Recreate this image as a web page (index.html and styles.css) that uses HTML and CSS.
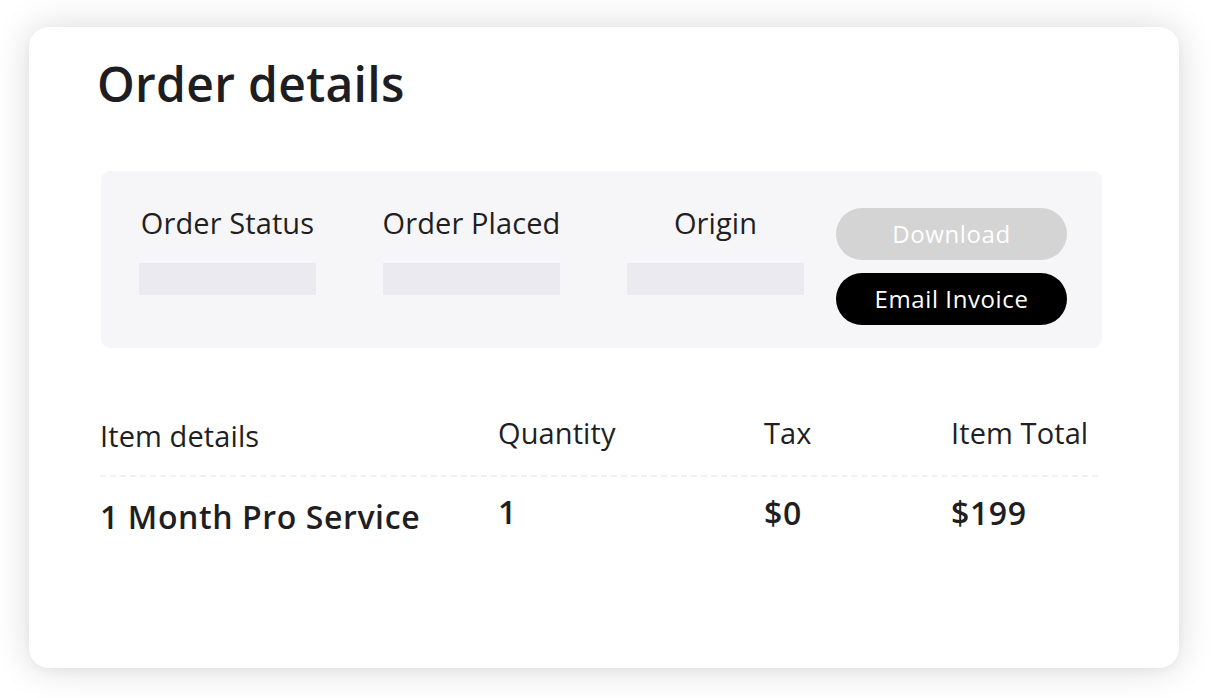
FILE: index.html
```
<!DOCTYPE html>
<html>
<head>
<meta charset="utf-8">
<link rel="stylesheet" href="styles.css">
</head>
<body>
<div class="card">
  <h1 class="title">Order details</h1>
  <div class="panel">
    <div class="col">
      <div class="label">Order Status</div>
      <div class="ph"></div>
    </div>
    <div class="col">
      <div class="label">Order Placed</div>
      <div class="ph"></div>
    </div>
    <div class="col">
      <div class="label">Origin</div>
      <div class="ph"></div>
    </div>
    <div class="actions">
      <button class="btn btn-disabled">Download</button>
      <button class="btn btn-dark">Email Invoice</button>
    </div>
  </div>
  <div class="table">
    <div class="thead">
      <div class="c1 th th-low">Item details</div>
      <div class="c2 th">Quantity</div>
      <div class="c3 th">Tax</div>
      <div class="c4 th">Item Total</div>
    </div>
    <div class="trow">
      <div class="c1 td td-low">1 Month Pro Service</div>
      <div class="c2 td">1</div>
      <div class="c3 td td-mid">$0</div>
      <div class="c4 td td-mid">$199</div>
    </div>
  </div>
</div>
</body>
</html>
```
FILE: styles.css
```
html, body {
  margin: 0;
  padding: 0;
  background: #ffffff;
}
body {
  font-family: "Open Sans", Lato, sans-serif;
  color: #1f1f23;
  padding: 27px 0 0 29px;
  height: 698px;
  box-sizing: border-box;
  overflow: hidden;
}
.card {
  width: 1150px;
  height: 641px;
  box-sizing: border-box;
  background: #fff;
  border-radius: 20px;
  box-shadow: 0 0 36px rgba(0,0,0,0.15), 0 4px 10px rgba(0,0,0,0.03);
  padding: 31px 0 0 68px;
}
.title {
  margin: 0;
  font-size: 48px;
  font-weight: 600;
  line-height: 52px;
  letter-spacing: 0.3px;
  color: #1e1e22;
}
.panel {
  margin: 61px 0 0 4px;
  width: 1001px;
  height: 177px;
  background: #f6f6f8;
  border-radius: 9px;
  display: flex;
  align-items: flex-start;
  padding: 0 0 0 38px;
  box-sizing: border-box;
}
.col {
  width: 177px;
  margin-right: 67px;
  display: flex;
  flex-direction: column;
  align-items: center;
  padding-top: 34px;
}
.label {
  font-size: 29px;
  line-height: 36px;
  white-space: nowrap;
  letter-spacing: 0.1px;
}
.ph {
  margin-top: 22px;
  width: 177px;
  height: 32px;
  background: #ebeaf0;
}
.actions {
  margin-left: -35px;
  padding-top: 37px;
  display: flex;
  flex-direction: column;
  gap: 13px;
}
.btn {
  width: 231px;
  height: 52px;
  border: none;
  border-radius: 26px;
  font-family: "Open Sans", Lato, sans-serif;
  font-size: 24px;
  color: #fff;
  padding: 0 0 2px;
  letter-spacing: 0.6px;
}
.btn-disabled { background: #d4d4d4; }
.btn-dark { background: #000; }
.table {
  margin: 67px 0 0 3px;
  width: 998px;
}
.thead, .trow {
  display: flex;
  align-items: flex-start;
}
.thead {
  height: 60px;
  border-bottom: 2px dashed #f0f1f6;
}
.c1 { width: 398px; }
.c2 { width: 266px; }
.c3 { width: 187px; }
.c4 { flex: 1; }
.th {
  font-size: 29px;
  line-height: 36px;
  letter-spacing: 0.1px;
  white-space: nowrap;
}
.th-low { padding-top: 3px; }
.trow { padding-top: 16px; }
.td {
  font-size: 32px;
  font-weight: 600;
  line-height: 38px;
  letter-spacing: 0.6px;
  white-space: nowrap;
}
.td-low { padding-top: 5px; }
.td-mid { padding-top: 1px; }
```
